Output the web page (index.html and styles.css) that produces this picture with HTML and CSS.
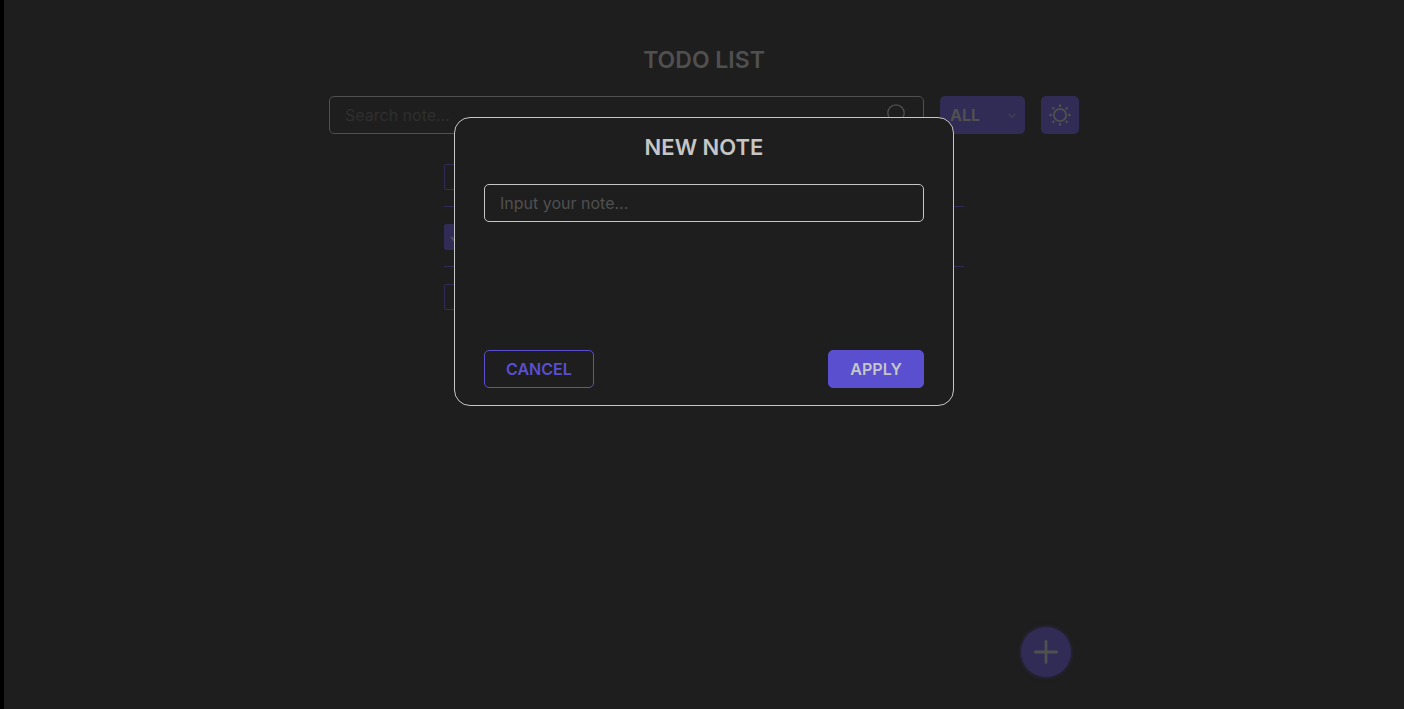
FILE: index.html
```html
<!DOCTYPE html>
<html lang="en">
<head>
<meta charset="utf-8">
<meta name="viewport" content="width=device-width, initial-scale=1">
<title>Todo list</title>
<link rel="stylesheet" href="styles.css">
</head>
<body>
<main class="page">
  <h1 class="title">TODO LIST</h1>
  <div class="toolbar">
    <div class="search">
      <input class="search-input" type="text" placeholder="Search note..." aria-label="Search note">
      <svg class="search-icon" width="22" height="22" viewBox="0 0 22 22" fill="none" stroke="currentColor" stroke-width="1.3" stroke-linecap="round" aria-hidden="true"><circle cx="12" cy="9" r="8.2"/><path d="M6 15L1 20"/></svg>
    </div>
    <div class="filter">
      <select class="filter-select" aria-label="Filter notes"><option>ALL</option></select>
      <svg class="filter-icon" width="8" height="6" viewBox="0 0 8 6" fill="none" stroke="currentColor" stroke-linecap="round" stroke-linejoin="round" aria-hidden="true"><path d="M1 1.2L4 4.5L7 1.2"/></svg>
    </div>
    <button class="theme" type="button" aria-label="Switch theme">
      <svg width="22" height="22" viewBox="0 0 22 22" fill="none" stroke="currentColor" aria-hidden="true"><circle cx="11" cy="11" r="6.1" stroke-width="1.9"/><path stroke-width="2.4" stroke-linecap="round" d="M11 1.4v.5M11 20.1v.5M1.4 11h.5M20.1 11h.5M4.2 4.2l.2.2M17.6 17.6l.2.2M4.2 17.8l.2-.2M17.6 4.4l.2-.2"/></svg>
    </button>
  </div>
  <ul class="notes">
    <li class="note"><input class="check" type="checkbox" aria-label="Note 1"></li>
    <li class="note"><input class="check" type="checkbox" checked aria-label="Note 2"><svg class="tick" width="16" height="14" viewBox="0 0 16 14" fill="none" stroke="currentColor" stroke-width="2" aria-hidden="true"><path d="M1 6L6 11L15 1"/></svg></li>
    <li class="note"><input class="check" type="checkbox" aria-label="Note 3"></li>
  </ul>
  <button class="add" type="button" aria-label="Add note">
    <svg width="24" height="24" viewBox="0 0 24 24" fill="none" stroke="currentColor" stroke-width="2.8" stroke-linecap="round" aria-hidden="true"><path d="M12 1.4v21.2M1.4 12h21.2"/></svg>
  </button>
</main>
<div class="overlay">
  <form class="modal" role="dialog" aria-labelledby="modal-title">
    <h2 class="modal-title" id="modal-title">NEW NOTE</h2>
    <input class="modal-input" type="text" placeholder="Input your note..." aria-label="Input your note">
    <div class="actions">
      <button class="btn btn-cancel" type="button">CANCEL</button>
      <button class="btn btn-apply" type="button">APPLY</button>
    </div>
  </form>
</div>
</body>
</html>
```

FILE: styles.css
```css
* { box-sizing: border-box; }
body {
  margin: 0;
  min-height: 100vh;
  position: relative;
  border-left: 4px solid #000;
  background: #1e1e1e;
  color: #505050;
  font-family: Inter, sans-serif;
}
input, select, button { font: inherit; color: inherit; margin: 0; }
button { cursor: pointer; padding: 0; }
.page {
  display: flex;
  flex-direction: column;
  max-width: 750px;
  min-height: 100vh;
  margin: 0 auto;
  padding: 40px 0 31px;
}
.title {
  margin: 0 0 16px;
  text-align: center;
  font-size: 23px;
  line-height: 40px;
  font-weight: 600;
}
.toolbar { display: flex; gap: 16px; }
.search { position: relative; flex: 1; display: flex; }
.search-input, .modal-input {
  width: 100%;
  height: 38px;
  padding: 0 15px;
  background: transparent;
  border: 1px solid #505050;
  border-radius: 5px;
  outline: none;
  font-size: 16px;
}
.search-input::placeholder { color: #2f2f2f; opacity: 1; }
.search-icon { position: absolute; right: 18px; top: 8px; }
.filter { position: relative; display: flex; width: 85px; }
.filter-select {
  appearance: none;
  width: 100%;
  height: 38px;
  padding: 0 10px;
  border: 0;
  border-radius: 5px;
  background: #302c55;
  font-size: 16px;
  font-weight: 700;
}
.filter-icon { position: absolute; right: 9px; top: 17px; }
.theme {
  display: grid;
  place-items: center;
  width: 38px;
  height: 38px;
  border: 0;
  border-radius: 5px;
  background: #302c55;
}
.notes {
  list-style: none;
  width: 100%;
  max-width: 520px;
  margin: 13px auto 0;
  padding: 0;
}
.note {
  position: relative;
  display: flex;
  align-items: center;
  height: 60px;
  border-bottom: 1px solid #302c55;
}
.note:last-child { border-bottom-color: transparent; }
.check {
  appearance: none;
  width: 26px;
  height: 26px;
  border: 1px solid #302c55;
  border-radius: 2px;
}
.check:checked { background: #302c55; }
.tick { position: absolute; left: 6px; top: 24px; }
.add {
  display: grid;
  place-items: center;
  width: 50px;
  height: 50px;
  margin: auto 8px 1px auto;
  border: 0;
  border-radius: 50%;
  background: #302c55;
  box-shadow: 0 0 4px #302c55;
}
.overlay {
  position: absolute;
  inset: 0;
  display: flex;
  justify-content: center;
  align-items: flex-start;
  padding-top: 117px;
}
.modal {
  display: flex;
  flex-direction: column;
  width: 100%;
  max-width: 500px;
  padding: 13px 29px 17px;
  background: #1e1e1e;
  border: 1px solid #c6c6c6;
  border-radius: 16px;
  color: #c6c6c6;
}
.modal-title {
  margin: 0 0 21px;
  text-align: center;
  font-size: 22px;
  line-height: 32px;
  font-weight: 600;
}
.modal-input { border-color: #c6c6c6; }
.modal-input::placeholder { color: #505050; opacity: 1; }
.actions {
  display: flex;
  justify-content: space-between;
  margin-top: 128px;
}
.btn {
  height: 38px;
  padding: 0 21px;
  border: 1px solid #5a4fcf;
  border-radius: 5px;
  font-size: 16px;
  font-weight: 600;
}
.btn-cancel { background: transparent; color: #5a4fcf; }
.btn-apply { background: #5a4fcf; }
```
